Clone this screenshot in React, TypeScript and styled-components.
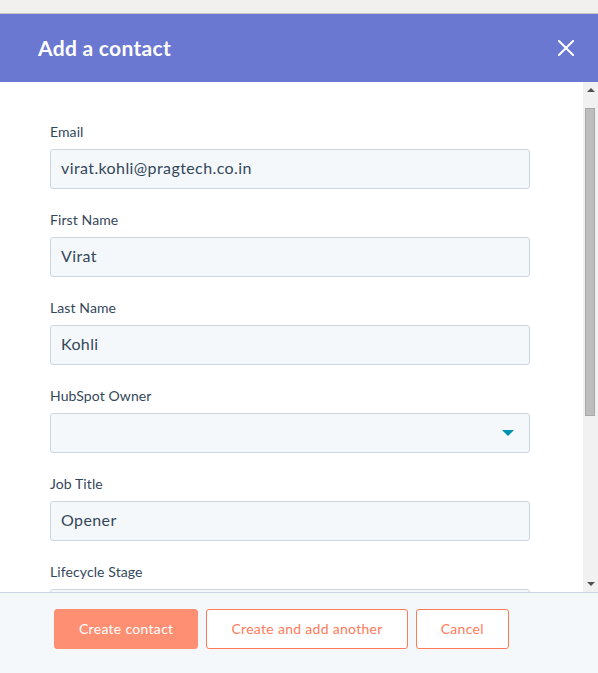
import React from "react";
import styled, { createGlobalStyle } from "styled-components";

const GlobalStyle = createGlobalStyle`
  html, body { margin: 0; padding: 0; height: 100%; }
  body { font-family: Lato, "Open Sans", sans-serif; color: #33475b; }
  * { box-sizing: border-box; }
`;

const Page = styled.div`
  display: flex;
  flex-direction: column;
  height: 673px;
  width: 598px;
  overflow: hidden;
`;

const TopStrip = styled.div`
  height: 14px;
  flex: none;
  background: #f1f0ee;
  border-bottom: 1px solid #c9c7c5;
`;

const Header = styled.header`
  flex: none;
  height: 68px;
  background: #6a78d1;
  display: flex;
  align-items: center;
  justify-content: space-between;
  padding: 0 24px 0 38px;
`;

const Title = styled.h1`
  margin: 0 0 2px;
  font-family: Lato, sans-serif;
  font-weight: 700;
  font-size: 21px;
  color: #ffffff;
  letter-spacing: 0.3px;
`;

const CloseButton = styled.button`
  border: 0;
  background: transparent;
  padding: 0;
  width: 16px;
  height: 16px;
  display: flex;
  cursor: pointer;
`;

const BodyRow = styled.div`
  flex: 1;
  min-height: 0;
  display: flex;
  background: #ffffff;
`;

const Content = styled.div`
  flex: 1;
  min-width: 0;
  overflow: hidden;
  padding: 40px 53px 0 50px;
  display: flex;
  flex-direction: column;
  gap: 21px;
`;

const ScrollBar = styled.div`
  flex: none;
  width: 15px;
  background: #f1f1f1;
  display: flex;
  flex-direction: column;
`;

const ScrollArrow = styled.div<{ $down?: boolean }>`
  flex: none;
  height: 16px;
  display: flex;
  align-items: center;
  justify-content: center;
  &::before {
    content: "";
    width: 0;
    height: 0;
    border-left: 4px solid transparent;
    border-right: 4px solid transparent;
    ${(p) => (p.$down ? "border-top: 4px solid #505050;" : "border-bottom: 4px solid #505050;")}
  }
`;

const ScrollTrack = styled.div`
  flex: 1;
  padding-top: 10px;
`;

const ScrollThumb = styled.div`
  height: 308px;
  margin: 0 3px 0 2px;
  background: #bdbdbd;
  border: 1px solid #a8a8a8;
`;

const Field = styled.div`
  flex: none;
  display: flex;
  flex-direction: column;
`;

const Label = styled.label`
  font-size: 14px;
  line-height: 20px;
  color: #33475b;
  margin-bottom: 7px;
  letter-spacing: 0.1px;
`;

const InputBox = styled.div`
  position: relative;
  height: 40px;
  background: #f5f8fa;
  border: 1px solid #cbd6e2;
  border-radius: 3px;
  display: flex;
  align-items: center;
  padding: 0 10px 3px;
  font-size: 16px;
  letter-spacing: 0.4px;
  color: #33475b;
`;

const Caret = styled.span`
  position: absolute;
  right: 15px;
  top: 50%;
  margin-top: -3px;
  width: 0;
  height: 0;
  border-left: 6px solid transparent;
  border-right: 6px solid transparent;
  border-top: 6px solid #0091ae;
`;

const Footer = styled.footer`
  flex: none;
  height: 81px;
  background: #f5f8fa;
  border-top: 1px solid #cbd6e2;
  padding: 16px 54px 0;
  display: flex;
  align-items: flex-start;
  gap: 8px;
`;

const Button = styled.button<{ $primary?: boolean }>`
  height: 40px;
  padding: 0 24px 1px;
  border-radius: 3px;
  display: flex;
  align-items: center;
  font-family: Lato, sans-serif;
  font-size: 14px;
  line-height: 18px;
  letter-spacing: 0.3px;
  cursor: pointer;
  border: 1px solid;
  background: ${(p) => (p.$primary ? "#ff8f73" : "#ffffff")};
  border-color: ${(p) => (p.$primary ? "#ff8f73" : "#ff7a59")};
  color: ${(p) => (p.$primary ? "#ffffff" : "#ff7a59")};
`;

type FieldDef = { label: string; value?: string; select?: boolean };

const fields: FieldDef[] = [
  { label: "Email", value: "virat.kohli@pragtech.co.in" },
  { label: "First Name", value: "Virat" },
  { label: "Last Name", value: "Kohli" },
  { label: "HubSpot Owner", select: true },
  { label: "Job Title", value: "Opener" },
  { label: "Lifecycle Stage", select: true },
];

export default function App() {
  return (
    <>
      <GlobalStyle />
      <Page>
        <TopStrip />
        <Header>
          <Title>Add a contact</Title>
          <CloseButton aria-label="Close">
            <svg width="16" height="16" viewBox="0 0 16 16">
              <path d="M1 1 L15 15 M15 1 L1 15" stroke="#ffffff" strokeWidth="2" strokeLinecap="square" />
            </svg>
          </CloseButton>
        </Header>
        <BodyRow>
          <Content>
            {fields.map((f) => (
              <Field key={f.label}>
                <Label>{f.label}</Label>
                <InputBox>
                  {f.value}
                  {f.select && <Caret />}
                </InputBox>
              </Field>
            ))}
          </Content>
          <ScrollBar aria-hidden="true">
            <ScrollArrow />
            <ScrollTrack>
              <ScrollThumb />
            </ScrollTrack>
            <ScrollArrow $down />
          </ScrollBar>
        </BodyRow>
        <Footer>
          <Button $primary>Create contact</Button>
          <Button>Create and add another</Button>
          <Button>Cancel</Button>
        </Footer>
      </Page>
    </>
  );
}
